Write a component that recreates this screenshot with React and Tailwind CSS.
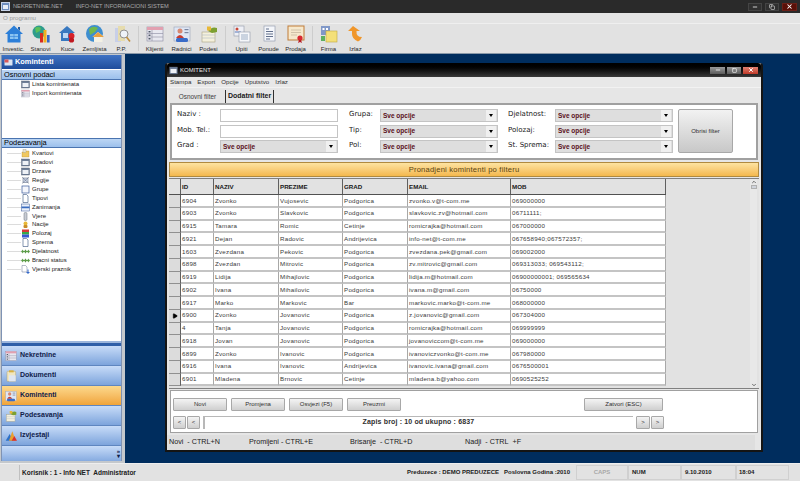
import React from 'react';
import { Minus, X, Square, Copy, Play, ChevronDown, ChevronUp } from 'lucide-react';

const font = "font-['Liberation_Sans',Arial,sans-serif]";

// small coloured pictures used in the toolbar, tree and side nav
const Pic = ({ name, size = 18 }) => {
  const shapes = {
    home: (
      <>
        <path d="M9 0.5 L18 9 L15.5 9 L15.5 17.5 L2.5 17.5 L2.5 9 L0 9 Z" fill="#2c7fd8" />
        <path d="M13 2 h2 v4 l-2 -2z" fill="#1c5ca8" />
        <rect x="5" y="9" width="8" height="5" fill="#8ac4f2" />
        <path d="M9 9 v5 M5 11.5 h8" stroke="#2c7fd8" strokeWidth=".6" />
      </>
    ),
    globeChart: (
      <>
        <circle cx="7" cy="7" r="6.5" fill="#2f9c8c" />
        <path d="M3 3 q3 -2 6 0 l-1 3 -4 2z" fill="#5cc05a" />
        <rect x="8" y="8" width="3" height="9.5" fill="#d82a20" />
        <rect x="11.5" y="5" width="3" height="12.5" fill="#f0b020" />
        <rect x="15" y="10" width="2.6" height="7.5" fill="#3468c8" />
      </>
    ),
    houseRed: (
      <>
        <path d="M8 1 L16 8 L14 8 L14 16 L2 16 L2 8 L0 8 Z" fill="#3878c0" />
        <rect x="4" y="8" width="5" height="5" fill="#bcd8f4" />
        <circle cx="12.5" cy="11" r="3" fill="#d8222a" />
        <circle cx="12.5" cy="15" r="2.6" fill="#c01820" />
      </>
    ),
    globeHouse: (
      <>
        <circle cx="8.5" cy="8.5" r="8.5" fill="#3e8ed0" />
        <path d="M3 4 q4 -4 9 -1 l-3 4 -5 3z" fill="#6fb84e" />
        <path d="M12 7 L18 12 L16.5 12 L16.5 17 L8 17 L8 12 L6.5 12 Z" fill="#f4f1e4" />
        <path d="M12 7 L18 12 L6.5 12 Z" fill="#e8a040" />
      </>
    ),
    pp: (
      <>
        <rect x="2" y="3" width="6" height="14" fill="#c8cfe8" />
        <rect x="5" y="1" width="7" height="15" fill="#e6dcae" />
        <circle cx="11" cy="9" r="4" fill="#eef2f8" stroke="#909090" />
        <path d="M13.5 12 L17 16.5" stroke="#c09040" strokeWidth="1.6" />
      </>
    ),
    list: (
      <>
        <rect x="1" y="2" width="16" height="14" fill="#e8e8f0" stroke="#8a8aa0" strokeWidth=".6" />
        <rect x="1" y="2" width="16" height="3" fill="#e2a0b0" />
        <path d="M6 5 v11 M1 8.5 h16 M1 12 h16" stroke="#8a8aa0" strokeWidth=".6" />
        <rect x="2.5" y="6" width="2" height="1.5" fill="#505868" />
        <rect x="2.5" y="9.5" width="2" height="1.5" fill="#505868" />
        <rect x="2.5" y="13" width="2" height="1.5" fill="#505868" />
      </>
    ),
    people: (
      <>
        <rect x="1" y="2" width="16" height="14" fill="#dfe6f4" stroke="#9aa4b8" strokeWidth=".6" />
        <circle cx="7" cy="6" r="2.5" fill="#d88870" />
        <path d="M3 13 q4 -6 8 0z" fill="#c83c30" />
        <rect x="11.5" y="4" width="4" height="1.2" fill="#7a86a0" />
        <rect x="11.5" y="7" width="4" height="1.2" fill="#7a86a0" />
        <rect x="3" y="13" width="12" height="4" rx="1.5" fill="#3a6cc8" />
      </>
    ),
    settings: (
      <>
        <rect x="2" y="7" width="13" height="10" fill="#f4f0dc" stroke="#a8a080" strokeWidth=".6" />
        <path d="M2 10 h13 M2 13 h13" stroke="#b0b8c8" strokeWidth=".6" />
        <path d="M8 6 q4 -5 9 -3 l0 4 -5 1z" fill="#7ca030" />
        <rect x="7" y="1.5" width="4" height="4" fill="#e8b838" />
      </>
    ),
    cards: (
      <>
        <rect x="1" y="1" width="10" height="10" fill="#eef0f6" stroke="#9098a8" strokeWidth=".6" />
        <circle cx="4" cy="4" r="1.5" fill="#c84838" />
        <rect x="1.8" y="6.5" width="6" height="1" fill="#5878b8" />
        <rect x="6" y="7" width="11" height="10" fill="#f6f7fa" stroke="#9098a8" strokeWidth=".6" />
        <path d="M8 10 h7 M8 12 h7 M8 14 h7" stroke="#7a90b0" strokeWidth=".7" />
      </>
    ),
    paper: (
      <>
        <rect x="4" y="1" width="11" height="15" fill="#f4f6fa" stroke="#8a94a8" strokeWidth=".6" />
        <path d="M6 4 h3 M6 6.5 h7 M6 9 h7 M6 11.5 h7 M6 14 h4" stroke="#3c4e70" strokeWidth=".8" />
      </>
    ),
    cert: (
      <>
        <rect x="1" y="1" width="16" height="14" fill="#f6e8cc" stroke="#c07c38" strokeWidth="1" />
        <path d="M4 5 h10 M4 7.5 h10 M4 10 h6" stroke="#b8a890" strokeWidth=".6" />
        <circle cx="13" cy="13" r="2.6" fill="#d82830" />
        <path d="M12 15 l-1 3 2 -1 2 1 -1 -3z" fill="#b81c24" />
      </>
    ),
    firm: (
      <>
        <rect x="1" y="1" width="9" height="9" fill="#8098c8" />
        <rect x="2.5" y="3" width="2" height="2" fill="#fff" />
        <rect x="6" y="3" width="2" height="2" fill="#fff" />
        <rect x="6" y="6" width="11" height="11" fill="#f4e078" stroke="#c0a840" strokeWidth=".6" />
        <rect x="1" y="11" width="4" height="5" fill="#5cb060" />
      </>
    ),
    exit: (
      <path d="M6 1 L1 6 L5 6 L5 9 Q5 14 11 16.5 Q14 15 15 12 Q9 12 9.5 6 L13 6 Z" fill="#f0962a" />
    ),
    window: (
      <>
        <rect x="1" y="2" width="16" height="14" fill="#6f7f98" stroke="#4a5568" strokeWidth=".8" />
        <rect x="3" y="6" width="12" height="8" fill="#eef1f6" />
      </>
    ),
    folder: (
      <>
        <path d="M2 6 h5 l1 -2 h8 v12 h-14z" fill="#f0c860" stroke="#b88c30" strokeWidth=".7" />
        <rect x="4" y="1" width="6" height="6" fill="#e8e4d0" stroke="#908870" strokeWidth=".6" />
      </>
    ),
    frame: <rect x="2" y="2" width="14" height="14" fill="#f4f6fc" stroke="#3a5a98" strokeWidth="1.4" />,
    net: (
      <>
        <rect x="4" y="4" width="10" height="9" fill="#d4dcec" stroke="#55617a" strokeWidth="1" />
        <path d="M2 2 L16 15 M16 2 L2 15" stroke="#55617a" strokeWidth="1" />
      </>
    ),
    doc: (
      <>
        <path d="M4 1 h7 l3 3 v13 h-10z" fill="#fff" stroke="#34507c" strokeWidth="1.2" />
      </>
    ),
    bars: (
      <>
        <rect x="1" y="2" width="16" height="14" fill="#eaf0fa" stroke="#3a5a98" strokeWidth="1" />
        <rect x="1" y="7" width="16" height="3.5" fill="#3a6cc0" />
      </>
    ),
    clip: <rect x="6" y="1" width="6" height="16" rx="2.5" fill="#c8ccd4" stroke="#68707c" strokeWidth="1" />,
    coin: (
      <>
        <circle cx="9" cy="7" r="4" fill="#e8b838" />
        <rect x="5" y="10" width="8" height="6" rx="2" fill="#c88c28" />
      </>
    ),
    rgb: (
      <>
        <rect x="2" y="1" width="14" height="5" fill="#d83838" />
        <rect x="2" y="6" width="14" height="5" fill="#38a848" />
        <rect x="2" y="11" width="14" height="6" fill="#3858d0" />
      </>
    ),
    arrows: (
      <path d="M0 9 L4 5 L4 7.5 L8 7.5 L8 5 L9 6 L10 5 L10 7.5 L14 7.5 L14 5 L18 9 L14 13 L14 10.5 L10 10.5 L10 13 L9 12 L8 13 L8 10.5 L4 10.5 L4 13 Z" fill="#5c9c48" />
    ),
    docArrow: (
      <>
        <path d="M2 1 h7 l3 3 v10 h-10z" fill="#fff" stroke="#5a6a8a" strokeWidth=".9" />
        <path d="M13 9 v5 h-3 l4 4 4 -4 h-3 v-5z" fill="#3468c8" />
      </>
    ),
    barsColor: (
      <>
        <path d="M1 16 L7 6 L12 16z" fill="#2c70c8" />
        <path d="M6 16 L11 2 L16 16z" fill="#e8a030" />
        <path d="M10 16 L14 9 L18 16z" fill="#d83030" />
      </>
    ),
    notes: (
      <>
        <rect x="3" y="2" width="13" height="15" rx="1" fill="#f0e6c0" stroke="#b0a070" strokeWidth=".7" />
        <rect x="6" y="0.5" width="7" height="3" fill="#d8b040" />
        <rect x="6" y="8" width="10" height="9" fill="#dfe6f2" />
      </>
    ),
    flag: (
      <>
        <rect x="1" y="3" width="16" height="12" rx="1" fill="#dce4f2" />
        <rect x="1" y="3" width="8" height="6" fill="#d85858" />
      </>
    ),
  };
  return (
    <svg width={size} height={size} viewBox="0 0 18 18" className="shrink-0">
      {shapes[name]}
    </svg>
  );
};

const toolGroups = [
  [
    ['home', 'Investic.'],
    ['globeChart', 'Stanovi'],
    ['houseRed', 'Kuce'],
    ['globeHouse', 'Zemljista'],
    ['pp', 'P.P.'],
  ],
  [
    ['list', 'Klijenti'],
    ['people', 'Radnici'],
    ['settings', 'Podesi'],
  ],
  [
    ['cards', 'Upiti'],
    ['paper', 'Ponude'],
    ['cert', 'Prodaja'],
  ],
  [
    ['firm', 'Firma'],
    ['exit', 'Izlaz'],
  ],
];

const settingsTree = [
  ['folder', 'Kvartovi'],
  ['window', 'Gradovi'],
  ['window', 'Drzave'],
  ['net', 'Regije'],
  ['frame', 'Grupe'],
  ['doc', 'Tipovi'],
  ['bars', 'Zanimanja'],
  ['clip', 'Vjere'],
  ['coin', 'Nacije'],
  ['rgb', 'Polozaj'],
  ['doc', 'Sprema'],
  ['arrows', 'Djelatnost'],
  ['arrows', 'Bracni status'],
  ['docArrow', 'Vjerski praznik'],
];

const navItems = [
  ['list', 'Nekretnine'],
  ['notes', 'Dokumenti'],
  ['people', 'Komintenti', true],
  ['settings', 'Podesavanja'],
  ['barsColor', 'Izvjestaji'],
];

const rows = [
  ['6904', 'Zvonko', 'Vujosevic', 'Podgorica', 'zvonko.v@t-com.me', '069000000'],
  ['6903', 'Zvonko', 'Slavkovic', 'Podgorica', 'slavkovic.zv@hotmail.com', '06711111;'],
  ['6915', 'Tamara', 'Romic', 'Cetinje', 'romicrajka@hotmail.com', '067000000'],
  ['6921', 'Dejan', 'Radovic', 'Andrijevica', 'info-net@t-com.me', '067658940;067572357;'],
  ['1603', 'Zvezdana', 'Pekovic', 'Podgorica', 'zvezdana.pek@gmail.com', '069002000'],
  ['6898', 'Zvezdan', 'Mitrovic', 'Podgorica', 'zv.mitrovic@gmail.com', '069313033; 069543112;'],
  ['6919', 'Lidija', 'Mihajlovic', 'Podgorica', 'lidija.m@hotmail.com', '06900000001; 069565634'],
  ['6902', 'Ivana', 'Mihailovic', 'Podgorica', 'ivana.m@gmail.com', '06750000'],
  ['6917', 'Marko', 'Markovic', 'Bar', 'markovic.marko@t-com.me', '068000000'],
  ['6900', 'Zvonko', 'Jovanovic', 'Podgorica', 'z.jovanovic@gmail.com', '067304000'],
  ['4', 'Tanja', 'Jovanovic', 'Podgorica', 'romicrajka@hotmail.com', '069999999'],
  ['6918', 'Jovan', 'Jovanovic', 'Podgorica', 'jovanoviccom@t-com.me', '069000000'],
  ['6899', 'Zvonko', 'Ivanovic', 'Podgorica', 'ivanoviczvonko@t-com.me', '067980000'],
  ['6916', 'Ivana', 'Ivanovic', 'Andrijevica', 'ivanovic.ivana@gmail.com', '0676500001'],
  ['6901', 'Mladena', 'Brnovic', 'Cetinje', 'mladena.b@yahoo.com', '0690525252'],
];

const cols = 'grid grid-cols-[12px_33px_65px_64px_65px_103px_155px]';

const Select = ({ w = 'w-[118px]' }) => (
  <div className={`${w} h-[13px] bg-[#dedede] border border-[#c4c4c4] flex items-center justify-between pl-[2px] pr-[1px]`}>
    <span className="text-[6.5px] font-bold text-[#5a1020]">Sve opcije</span>
    <span className="w-[10px] h-[11px] bg-[#f0f0f0] flex items-center justify-center">
      <span className="border-x-[2px] border-x-transparent border-t-[3px] border-t-black" />
    </span>
  </div>
);

const Label = ({ children, className = '' }) => (
  <span className={`h-[13px] leading-[11px] text-[7px] text-[#202020] font-['DejaVu_Sans',sans-serif] ${className}`}>{children}</span>
);

const Btn = ({ children, className = '' }) => (
  <button className={`h-[13px] rounded-[1px] border border-[#a8a8a8] bg-gradient-to-b from-[#f4f4f4] to-[#cfcfcf] text-[6px] text-[#303030] flex items-center justify-center ${className}`}>
    {children}
  </button>
);

const StatusCell = ({ children, className = '' }) => (
  <div className={`h-[15px] flex items-center font-bold text-[#202020] bg-[#e2e2e2] ${className}`}>{children}</div>
);

export default function App() {
  return (
    <div className={`${font} w-[800px] h-[481px] overflow-hidden flex flex-col bg-[#e2e2e2] text-[6.2px] text-[#222]`}>
      {/* app title bar */}
      <div className="h-[13px] bg-[#2a2a2a] flex items-center shrink-0">
        <span className="w-[9px] h-[9px] ml-[1px] bg-[#6f8fc0] border border-[#c8d4e8] flex items-center justify-center">
          <span className="w-[5px] h-[4px] bg-[#e8eef8]" />
        </span>
        <span className="ml-[3px] text-[5.7px] text-[#a8a8a8]">NEKRETNINE.NET</span>
        <span className="ml-[13px] text-[5.7px] text-[#a8a8a8]">INFO-NET INFORMACIONI SISTEM</span>
        <div className="ml-auto flex gap-[3px] mr-[3px]">
          <span className="w-[14px] h-[8px] bg-[#303030] border border-[#444] flex items-center justify-center">
            <Minus size={6} strokeWidth={3} color="#fff" />
          </span>
          <span className="w-[14px] h-[8px] bg-[#303030] border border-[#444] flex items-center justify-center">
            <Copy size={6} strokeWidth={2} color="#fff" />
          </span>
          <span className="w-[15px] h-[8px] bg-[#5a1008] border border-[#6a2018] flex items-center justify-center">
            <X size={7} strokeWidth={3.5} color="#fff" />
          </span>
        </div>
      </div>

      {/* menu */}
      <div className="h-[11px] shrink-0 bg-[#e4e4e4] border-b border-[#efefef] flex items-center pl-[3px] text-[#9a9a9a]">O programu</div>

      {/* toolbar */}
      <div className="h-[30px] shrink-0 bg-[#e2e2e2] border-b border-[#8a98a8] flex items-stretch">
        {toolGroups.map((group, i) => (
          <React.Fragment key={i}>
            {i > 0 && <div className="w-[1px] bg-[#cdcdcd] mx-[2.5px] my-[2px]" />}
            {group.map(([pic, label]) => (
              <div key={label} className="w-[27px] flex flex-col items-center pt-[1px]">
                <Pic name={pic} />
                <span className="mt-[3px] text-[6px] leading-[7px] whitespace-nowrap text-[#282828]">{label}</span>
              </div>
            ))}
          </React.Fragment>
        ))}
      </div>

      <div className="flex-1 flex min-h-0">
        {/* left panel */}
        <div className="w-[125px] shrink-0 bg-[#c4c8cc] pl-[1px] pr-[3px] pt-[1px] pb-[2px]">
          <div className="h-full bg-white flex flex-col border-x border-[#7f93b4] text-[6px]">
            <div className="h-[14px] shrink-0 bg-gradient-to-b from-[#3f73c4] to-[#1f4d9c] flex items-center pl-[2px] gap-[2px]">
              <Pic name="flag" size={9} />
              <span className="text-[7.4px] font-bold text-white">Komintenti</span>
            </div>
            <div className="h-[10px] mt-[1px] shrink-0 bg-gradient-to-b from-[#bcd6f4] to-[#9cc0ec] border-b border-[#4a74b0] flex items-center pl-[2px] text-[7.4px] text-black">Osnovni podaci</div>
            <div className="h-[58px] shrink-0 pl-[19px]">
              <div className="flex items-center h-[9px] gap-[2px]">
                <Pic name="window" size={9} />Lista komintenata
              </div>
              <div className="flex items-center h-[9px] gap-[2px]">
                <Pic name="list" size={9} />Inport komintenata
              </div>
            </div>
            <div className="h-[10px] shrink-0 bg-gradient-to-b from-[#bcd6f4] to-[#9cc0ec] border-y border-[#4a74b0] flex items-center pl-[2px] text-[7.4px] text-black">Podesavanja</div>
            <div className="flex-1 pt-[1px]">
              {settingsTree.map(([pic, label]) => (
                <div key={label} className="flex items-center h-[8.95px] pl-[5px]">
                  <span className="w-[14px] border-t border-[#dcdcdc]" />
                  <Pic name={pic} size={9} />
                  <span className="ml-[2px]">{label}</span>
                </div>
              ))}
            </div>
            {/* splitter */}
            <div className="h-[5px] shrink-0 bg-[#2f5fa8] border-t-2 border-[#9cb6dc]" />
            {navItems.map(([pic, label, active]) => (
              <div
                key={label}
                className={`h-[20px] shrink-0 flex items-center pl-[3px] gap-[3px] border-b border-[#5f86c0] ${active ? 'bg-gradient-to-b from-[#fcd98c] to-[#f0a438]' : 'bg-gradient-to-b from-[#c8dcf8] to-[#7da4dc]'}`}
              >
                <Pic name={pic} size={12} />
                <span className="text-[7px] font-bold text-[#10204a]">{label}</span>
              </div>
            ))}
            <div className="flex-none h-[15px] bg-gradient-to-b from-[#c8dcf8] to-[#86abe0] flex items-center justify-end pr-[1px]">
              <span className="text-[6px] leading-[5px] font-bold text-[#10204a] text-center">»<br />▾</span>
            </div>
          </div>
        </div>

        {/* desktop with the child window */}
        <div className="flex-1 bg-[#002d5e] pl-[40px] pt-[9px]">
          <div className="w-[598px] h-[389px] rounded-t-[3px] bg-[#e6e6e6] border-2 border-[#141414] border-t-0 flex flex-col">
            {/* window title */}
            <div className="h-[14px] shrink-0 bg-gradient-to-b from-black to-[#3a3a3a] flex items-center pl-[2px] rounded-t-[3px]">
              <Pic name="window" size={9} />
              <span className="ml-[2px] text-[6px] text-[#e8e8e8]">KOMITENT</span>
              <div className="ml-auto flex gap-[2px] mr-[3px]">
                <span className="w-[15px] h-[7px] bg-gradient-to-b from-[#9a9a9a] to-[#5c5c5c] flex items-center justify-center">
                  <Minus size={6} strokeWidth={3} color="#fff" />
                </span>
                <span className="w-[14px] h-[7px] bg-gradient-to-b from-[#9a9a9a] to-[#5c5c5c] flex items-center justify-center">
                  <Square size={5} strokeWidth={3} color="#fff" />
                </span>
                <span className="w-[15px] h-[7px] bg-gradient-to-b from-[#e08070] to-[#c03828] flex items-center justify-center">
                  <X size={6} strokeWidth={4} color="#fff" />
                </span>
              </div>
            </div>
            {/* window menu */}
            <div className="h-[10px] shrink-0 flex items-center gap-[6px] pl-[3px] bg-[#e8e8e8] text-[#303030]">
              <span>Stampa</span><span>Export</span><span>Opcije</span><span>Uputstvo</span><span>Izlaz</span>
            </div>
            {/* tabs */}
            <div className="h-[16px] shrink-0 flex items-end pl-[4px] border-t border-[#f2f2f2]">
              <span className="w-[53px] h-[13px] flex items-center justify-center text-[6.4px] text-[#404040]">Osnovni filter</span>
              <span className="h-[13px] ml-[1px] px-[2px] border-x border-[#303030] flex items-center text-[7px] font-bold text-[#202020]">Dodatni filter</span>
            </div>

            {/* filter box */}
            <div className="h-[57px] shrink-0 mx-[3px] border-2 border-[#a0a0a0] bg-white flex pl-[5px] pt-[4px]">
              <div className="w-[42px] flex flex-col gap-[2.5px]">
                <Label>Naziv :</Label>
                <Label>Mob. Tel.:</Label>
                <Label>Grad :</Label>
              </div>
              <div className="w-[118px] flex flex-col gap-[2.5px] ml-[1px]">
                <div className="h-[13px] border border-[#c4c4c4]" />
                <div className="h-[13px] border border-[#c4c4c4]" />
                <Select />
              </div>
              <div className="w-[31px] ml-[11px] flex flex-col gap-[2.5px]">
                <Label>Grupa:</Label>
                <Label>Tip:</Label>
                <Label>Pol:</Label>
              </div>
              <div className="flex flex-col gap-[2.5px]">
                <Select />
                <Select />
                <Select />
              </div>
              <div className="w-[47px] ml-[10px] flex flex-col gap-[2.5px]">
                <Label>Djelatnost:</Label>
                <Label>Polozaj:</Label>
                <Label>St. Sprema:</Label>
              </div>
              <div className="flex flex-col gap-[2.5px]">
                <Select />
                <Select />
                <Select />
              </div>
              <button className="w-[55px] h-[44px] ml-[5px] rounded-[2px] border border-[#a8a8a8] bg-gradient-to-b from-[#f2f2f2] to-[#c8c8c8] text-[6px] text-[#303030]">Obrisi filter</button>
            </div>

            {/* orange heading */}
            <div className="h-[15px] shrink-0 mx-[2px] mt-[2px] border border-[#b08a40] bg-gradient-to-b from-[#fde3a0] to-[#f4b84c] flex items-center justify-center text-[7.6px] text-[#5a4410] tracking-[0.2px]">
              Pronadjeni komintenti po filteru
            </div>

            {/* table */}
            <div className="h-[211px] shrink-0 mx-[2px] mt-[1px] border-y border-[#808080] bg-[#e2e2e2] flex relative">
              <div className="w-[581px]">
                <div className={`${cols} w-[497px] h-[16px] border-b border-[#505050]`}>
                  {['', 'ID', 'NAZIV', 'PREZIME', 'GRAD', 'EMAIL', 'MOB'].map((h, i) => (
                    <div key={i} className="border-r border-[#606060] bg-[#e2e2e2] pl-[1px] flex items-center text-[6.2px] font-bold text-[#181818]">{h}</div>
                  ))}
                </div>
                {rows.map((row) => (
                  <div key={row[0] + row[1]} className={`${cols} w-[497px] h-[12.75px]`}>
                    <div className="bg-[#dcdcdc] border-r border-[#606060] border-b border-b-[#909090] flex items-center justify-center">
                      {row[0] === '6900' && <Play size={6} fill="#000" color="#000" />}
                    </div>
                    {row.map((cell, i) => (
                      <div key={i} className="bg-white border-r border-[#a8a8a8] border-b-2 border-b-[#c4c4c4] pl-[1px] flex items-center whitespace-nowrap overflow-hidden text-[6.2px] tracking-[0.25px] text-[#3a3a3a]">{cell}</div>
                    ))}
                  </div>
                ))}
              </div>
              <div className="w-[7px] bg-[#e8e8e8] flex flex-col items-center">
                <ChevronUp size={6} strokeWidth={3} color="#444" />
                <span className="w-[6px] h-[4px] bg-[#d0d4dc] border border-[#b0b0b0]" />
                <ChevronDown size={6} strokeWidth={3} color="#444" className="mt-auto" />
              </div>
            </div>

            {/* buttons and record line */}
            <div className="h-[43px] shrink-0 mx-[3px] mt-[1px] border border-[#a0a0a0] bg-white px-[2px]">
              <div className="flex mt-[7px]">
                <div className="flex gap-[4px]">
                  <Btn className="w-[54px]">Novi</Btn>
                  <Btn className="w-[54px]">Promjena</Btn>
                  <Btn className="w-[54px]">Osvjezi (F5)</Btn>
                  <Btn className="w-[54px]">Preuzmi</Btn>
                </div>
                <Btn className="w-[79px] ml-[183px]">Zatvori (ESC)</Btn>
              </div>
              <div className="flex mt-[5px] items-center">
                <Btn className="w-[13px]">&lt;</Btn>
                <Btn className="w-[13px] ml-[1px]">&lt;</Btn>
                <div className="w-[430px] h-[13px] ml-[3px] border-l-2 border-t border-[#b8b8b8] flex items-start justify-center pr-[1px] text-[7px] leading-[9px] font-bold text-[#303030] tracking-[0.15px]">
                  Zapis broj : 10 od ukupno : 6837
                </div>
                <Btn className="w-[14px] ml-[3px]">&gt;</Btn>
                <Btn className="w-[13px] ml-[1px]">&gt;</Btn>
              </div>
            </div>

            {/* shortcuts */}
            <div className="flex-1 mt-[2px] bg-[#dedede] flex items-center text-[7.2px] text-[#202020] mr-[6px]">
              <span className="w-[82px] pl-[2px]">Novi&nbsp; - CTRL+N</span>
              <span className="w-[101px]">Promijeni - CTRL+E</span>
              <span className="w-[115px]">Brisanje&nbsp; - CTRL+D</span>
              <span>Nadji&nbsp; - CTRL&nbsp; +F</span>
            </div>
          </div>
        </div>
      </div>

      {/* status bar */}
      <div className="h-[18px] shrink-0 bg-[#e2e2e2] border-t border-[#eeeeee] flex items-start pt-[1px] text-[6px]">
        <div className="w-[20px] h-[15px] border-r border-[#c0c0c0]" />
        <StatusCell className="w-[380px] pl-[2px] text-[6.5px]">Korisnik : 1 - Info NET&nbsp; Administrator</StatusCell>
        <StatusCell className="w-[175px] pl-[7px] bg-[#dadada]">Preduzece : DEMO PREDUZECE&nbsp;&nbsp; Poslovna Godina :2010</StatusCell>
        <StatusCell className="w-[52px] ml-[1px] justify-center text-[#a8a8a8] border border-[#d0d0d0]">CAPS</StatusCell>
        <StatusCell className="w-[53px] pl-[3px] border border-[#d0d0d0]">NUM</StatusCell>
        <StatusCell className="w-[55px] pl-[3px] border border-[#d0d0d0]">9.10.2010</StatusCell>
        <StatusCell className="w-[53px] pl-[2px] border border-[#d0d0d0]">18:04</StatusCell>
      </div>
    </div>
  );
}
